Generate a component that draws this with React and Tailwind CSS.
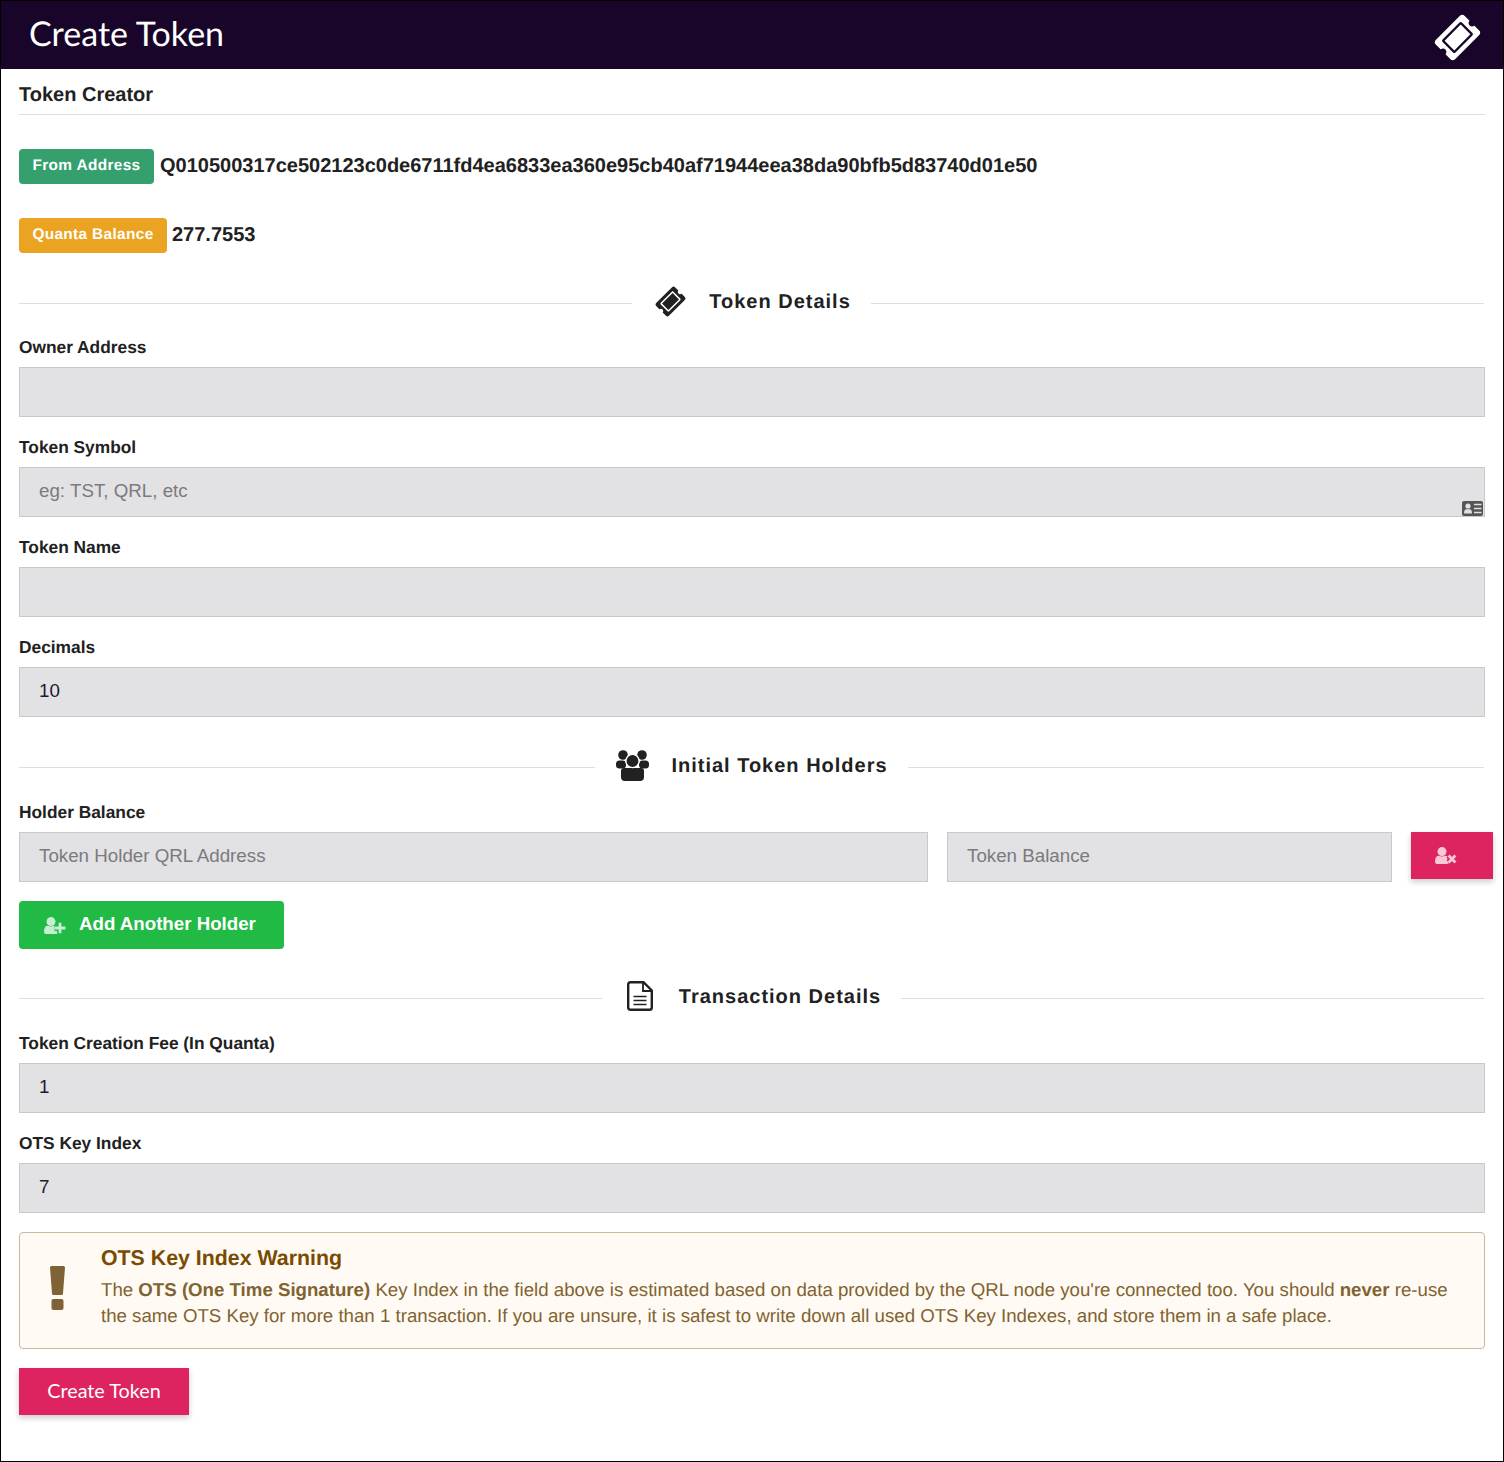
import React from "react";
import { FaTicketAlt } from "react-icons/fa";

const sans = "font-['Liberation_Sans',Arial,sans-serif]";

function UsersIcon() {
  return (
    <svg viewBox="0 0 33 32" className="w-[33px] h-[32px] mt-[2px]" fill="#212121">
      <circle cx="7" cy="5" r="4.8" />
      <circle cx="26" cy="5" r="4.8" />
      <rect x="0" y="10.5" width="10" height="8" rx="3.5" />
      <rect x="23" y="10.5" width="10" height="8" rx="3.5" />
      <path d="M5 21 Q5 18 8 18 H25 Q28 18 28 21 L28 27 Q28 31 24 31 H9 Q5 31 5 27 Z" />
      <circle cx="16.5" cy="11" r="6.6" stroke="#fff" strokeWidth="1.4" />
    </svg>
  );
}

function FileIcon() {
  return (
    <svg viewBox="0 0 26 30" className="w-[26px] h-[30px]" fill="none" stroke="#212121" strokeWidth="2.4">
      <path d="M3.5 1.2 H16.5 L24.8 9.5 V26.5 Q24.8 28.8 22.5 28.8 H3.5 Q1.2 28.8 1.2 26.5 V3.5 Q1.2 1.2 3.5 1.2 Z" />
      <path d="M16 1.5 V10 H24.5" strokeWidth="1.8" />
      <path d="M6.5 15.5 H19.5 M6.5 19.5 H19.5 M6.5 23.5 H19.5" strokeWidth="1.7" />
    </svg>
  );
}

function CardIcon() {
  return (
    <svg viewBox="0 0 21 15" className="absolute right-[2px] bottom-[1px] w-[21px] h-[15px]">
      <rect width="21" height="15" rx="2" fill="#555" />
      <circle cx="6" cy="5" r="2.6" fill="#e2e1e4" />
      <path d="M2 12.5 Q2 8.2 4.5 8.2 H7.5 Q10 8.2 10 12.5 Z" fill="#e2e1e4" />
      <path d="M12 3.5 H19.5 M12 7.5 H19.5 M12 11.5 H19.5" stroke="#e2e1e4" strokeWidth="1.7" />
    </svg>
  );
}

function PersonAction({ kind, color, bg }) {
  return (
    <svg viewBox="0 0 22 17" className="w-[22px] h-[17px] shrink-0">
      <circle cx="7" cy="4.6" r="4.5" fill={color} />
      <path d="M0 14.5 Q0 8.8 4 8.8 Q7 10.2 10 8.8 Q14 8.8 14 14.5 Q14 17 12 17 H2 Q0 17 0 14.5 Z" fill={color} />
      {kind === "plus" ? (
        <>
          <path d="M10.5 11 H21.5 M16 5.5 V16.5" stroke={bg} strokeWidth="6" />
          <path d="M10.8 11 H21.5 M16 5.8 V16.2" stroke={color} strokeWidth="2.8" />
        </>
      ) : (
        <>
          <path d="M13.6 8.6 L20.4 15.4 M20.4 8.6 L13.6 15.4" stroke={bg} strokeWidth="6" />
          <path d="M13.6 8.6 L20.4 15.4 M20.4 8.6 L13.6 15.4" stroke={color} strokeWidth="2.8" />
        </>
      )}
    </svg>
  );
}

function SectionDivider({ icon, title, className }) {
  return (
    <div className={`flex items-center h-[40px] ${className}`}>
      <div className="flex-1 h-px bg-[#dedede] mt-[4px]" />
      <div className="flex items-center pl-[21px] pr-[20px]">
        <span className="flex items-center justify-center mr-[22px]">{icon}</span>
        <span className="mt-[2px] text-[20px] font-bold tracking-[1px] text-[#212121] leading-none">{title}</span>
      </div>
      <div className="flex-1 h-px bg-[#dedede] mt-[4px] mr-[1px]" />
    </div>
  );
}

function Field({ label, value, placeholder, icon }) {
  return (
    <div className="mb-[21px]">
      <label className="block text-[17.33px] font-bold text-[#212121] leading-[18px] mb-[11px]">{label}</label>
      <div className="relative">
        <input readOnly value={value ?? ""} placeholder={placeholder} className="block w-full h-[50px] bg-[#e2e1e4] border border-[#c9c9c9] px-[19px] pb-[3px] text-[18.75px] text-[#1f1a33] placeholder:text-[#7b7b7d] outline-none" />
        {icon}
      </div>
    </div>
  );
}

export default function App() {
  return (
    <div className={`w-[1504px] h-[1462px] bg-white border border-black ${sans} text-[#212121] overflow-hidden [text-rendering:geometricPrecision]`}>
      <header className="h-[68px] bg-[#180529] flex items-center justify-between pl-[28px] pr-[25px]">
        <h1 className="font-['Lato',sans-serif] text-[34px] text-white font-normal leading-none pb-[3px]">Create Token</h1>
        <FaTicketAlt className="text-white w-[41px] h-[41px] -rotate-45 mt-[4px]" />
      </header>
      <main className="px-[18px]">
        <h2 className="h-[46px] pt-[15px] text-[20px] font-bold leading-[23px] border-b border-[#dedede]">Token Creator</h2>
        <div className="mt-[34px] flex items-center h-[35px]">
          <span className="h-[35px] w-[135px] rounded-[4px] bg-[#35a06e] text-white text-[15.4px] tracking-[0.35px] font-bold flex items-center justify-center pb-[1px]">From Address</span>
          <span className="ml-[6px] text-[20px] font-bold pb-[2px]">Q010500317ce502123c0de6711fd4ea6833ea360e95cb40af71944eea38da90bfb5d83740d01e50</span>
        </div>
        <div className="mt-[34px] flex items-center h-[35px]">
          <span className="h-[35px] w-[148px] rounded-[4px] bg-[#eba421] text-white text-[15.4px] tracking-[0.35px] font-bold flex items-center justify-center pb-[1px]">Quanta Balance</span>
          <span className="ml-[5px] text-[20px] font-bold pb-[2px]">277.7553</span>
        </div>
        <SectionDivider className="mt-[28px] mb-[17px]" title="Token Details" icon={<span className="w-[34px] flex justify-center"><FaTicketAlt className="w-[27px] h-[27px] -rotate-45 text-[#212121]" /></span>} />
        <Field label="Owner Address" />
        <Field label="Token Symbol" placeholder="eg: TST, QRL, etc" icon={<CardIcon />} />
        <Field label="Token Name" />
        <Field label="Decimals" value="10" />
        <SectionDivider className="mt-[28px] mb-[18px]" title="Initial Token Holders" icon={<UsersIcon />} />
        <label className="block text-[17.33px] font-bold leading-[18px] mb-[11px]">Holder Balance</label>
        <div className="flex gap-[19px] -mr-[8px] items-start">
          <input readOnly placeholder="Token Holder QRL Address" className="w-[909px] h-[50px] bg-[#e2e1e4] border border-[#c9c9c9] px-[19px] pb-[3px] text-[18.75px] placeholder:text-[#7b7b7d] outline-none" />
          <input readOnly placeholder="Token Balance" className="w-[445px] h-[50px] bg-[#e2e1e4] border border-[#c9c9c9] px-[19px] pb-[3px] text-[18.75px] placeholder:text-[#7b7b7d] outline-none" />
          <button className="w-[82px] h-[47px] bg-[#de2460] shadow-[0_3px_6px_rgba(0,0,0,0.2)] flex items-center justify-start pl-[24px]">
            <PersonAction kind="x" color="#f8c8d7" bg="#de2460" />
          </button>
        </div>
        <button className="mt-[19px] w-[265px] h-[48px] rounded-[4px] bg-[#21ba45] text-white text-[18.7px] font-bold flex items-center pl-[25px]">
          <PersonAction kind="plus" color="#c8eed1" bg="#21ba45" />
          <span className="ml-[13px] pb-[2px]">Add Another Holder</span>
        </button>
        <SectionDivider className="mt-[27px] mb-[18px]" title="Transaction Details" icon={<span className="w-[34px] flex justify-center"><FileIcon /></span>} />
        <Field label="Token Creation Fee (In Quanta)" value="1" />
        <Field label="OTS Key Index" value="7" />
        <div className="-mt-[2px] h-[117px] rounded-[4px] border border-[#c9ba9b] bg-[#fffaf3] flex items-start pr-[20px]">
          <svg viewBox="0 0 15 44" className="w-[15px] h-[44px] mt-[33px] ml-[30px] mr-[36px] shrink-0" fill="#7f6336">
            <path d="M1.5 0 H13.5 Q15 0 15 1.5 L13 27.5 Q13 29 11.5 29 H3.5 Q2 29 2 27.5 L0 1.5 Q0 0 1.5 0 Z" />
            <rect x="1.5" y="33" width="12" height="11" rx="2" />
          </svg>
          <div className="pt-[13px] text-[18.67px] leading-[26px] text-[#7f6331]">
            <div className="text-[21.33px] font-bold leading-[24px] text-[#794b02] mb-[7px]">OTS Key Index Warning</div>
            <p>The <b>OTS (One Time Signature)</b> Key Index in the field above is estimated based on data provided by the QRL node you're connected too. You should <b>never</b> re-use the same OTS Key for more than 1 transaction. If you are unsure, it is safest to write down all used OTS Key Indexes, and store them in a safe place.</p>
          </div>
        </div>
        <button className="mt-[19px] w-[170px] h-[47px] bg-[#de2460] text-white font-['Lato',sans-serif] text-[19.8px] pb-[1px] shadow-[0_3px_6px_rgba(0,0,0,0.2)]">Create Token</button>
      </main>
    </div>
  );
}
